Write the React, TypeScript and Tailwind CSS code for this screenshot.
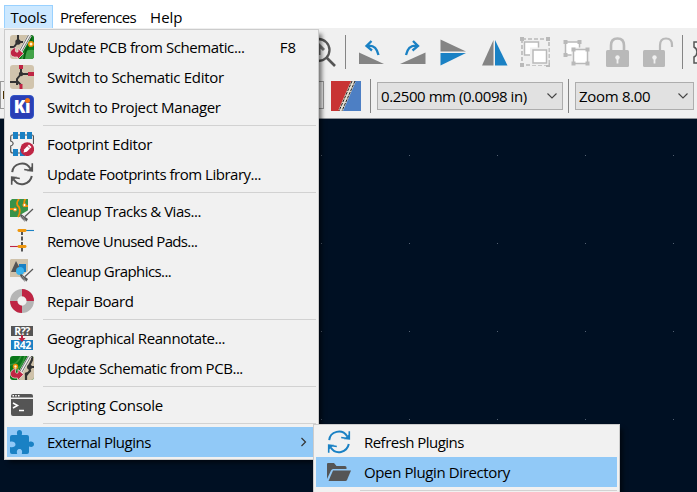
import React from "react";

const FONT = "font-['Open_Sans','Noto_Sans',sans-serif]";

type IconProps = { box: string; children: React.ReactNode; className?: string };

function Icon({ box, children, className = "h-6 w-6" }: IconProps) {
  return (
    <svg viewBox={box} className={`block shrink-0 ${className}`} fill="none">
      {children}
    </svg>
  );
}

const TransferArrow = () => (
  <>
    <path d="M20 0L8 21" stroke="#eee" strokeWidth="4" />
    <path d="M18.5 0L9 17M20.5 1L12 16" stroke="#666" strokeWidth="0.9" />
    <path d="M6 12.5C-2 14 -1.500 23.500 7.500 22V24.500L13.500 18.500L8 13.500V17Q4 18 6 12.500Z" fill="#bf2544" stroke="#f3e9e6" strokeWidth="0.7" />
  </>
);

const PcbFromSchematic = () => (
  <Icon box="0 0 24 24">
    <clipPath id="pfs"><rect width="24" height="24" rx="3" /></clipPath>
    <g clipPath="url(#pfs)">
      <rect width="24" height="24" fill="#cfc2aa" />
      <path d="M8 0V7M8 7H13M7 8L4 12H0" stroke="#333" strokeWidth="2" />
      <circle cx="8" cy="7" r="2.7" fill="#333" />
      <path d="M24 0V24H8L20 0Z" fill="#0c7c1b" />
      <path d="M14 17Q19 14 24 15V24H11Z" fill="#42a348" />
      <path d="M21 0V6M19 11Q15 15 14 24" stroke="#075e12" strokeWidth="2" />
      <circle cx="21" cy="9" r="2.3" fill="#fff2d0" stroke="#e88b00" strokeWidth="1.6" />
      <TransferArrow />
    </g>
  </Icon>
);

const SchematicFromPcb = () => (
  <Icon box="0 0 24 24">
    <clipPath id="sfp"><rect width="24" height="24" rx="3" /></clipPath>
    <g clipPath="url(#sfp)">
      <rect width="24" height="24" fill="#087719" />
      <path d="M0 9Q8 8 11 0M3 16Q12 12 15 0" stroke="#35933b" strokeWidth="1.6" />
      <path d="M24 0V24H9L20 0Z" fill="#cfc2aa" />
      <path d="M22 0V4L19 10L20 15L16 19V24M18 11H24" stroke="#333" strokeWidth="2.2" />
      <circle cx="19.500" cy="11" r="2.5" fill="#333" />
      <circle cx="16.500" cy="18" r="1.800" fill="#333" />
      <circle cx="5.500" cy="10.500" r="2" fill="#fff2d0" stroke="#e88b00" strokeWidth="1.5" />
      <TransferArrow />
    </g>
  </Icon>
);

const SchematicIcon = () => (
  <Icon box="0 0 24 24">
    <rect width="24" height="24" rx="3" fill="#d1c4ad" />
    <path d="M11 4V9L7 14V20M11 9H19M0 17H7M7 16L11 20" stroke="#333" strokeWidth="2" />
    <path d="M11 0V4M18 9H24" stroke="#bf2544" strokeWidth="4" />
    <path d="M11 19V24" stroke="#bf2544" strokeWidth="3" />
    <circle cx="11" cy="9" r="2.2" fill="#333" />
  </Icon>
);

const KiIcon = () => (
  <div className="relative flex h-6 w-6 items-center justify-center rounded-[4px] border border-[#3156c8] bg-[#2a3fb5]">
    <span className="text-[17px] font-extrabold leading-6 tracking-[-0.3px] text-white">Kı</span>
    <span className="absolute right-[3px] top-[2px] h-[5px] w-[5px] rounded-full bg-[#f47612]" />
  </div>
);

const FootprintIcon = () => (
  <Icon box="0 0 24 24">
    <path d="M2 3H22Q23.5 3 23.5 5V12M2 3Q.7 3 .7 5V9C4 10 4 13 .7 14V19Q.7 21 3 21H12" stroke="#555" strokeWidth="1.2" />
    <path d="M3 0H8V7H3ZM10 0H15V7H10ZM17 0H22V7H17ZM3 17H8V24H3ZM10 17H15V24H10Z" fill="#1a81c4" />
    <circle cx="17.2" cy="17.2" r="6.9" fill="#bf2544" />
    <path d="M13.5 20.5L14.3 17.2L19 12.5L21.5 15L16.8 19.7Z" fill="#fff" />
    <path d="M17.5 14L20 16.5" stroke="#bf2544" strokeWidth=".7" />
  </Icon>
);

const RefreshIcon = ({ color }: { color: string }) => (
  <Icon box="0 0 24 24">
    <path d="M2.2 10.2C3 1.5 15 -2 20.3 6.5M21.8 14C20 22.5 9 25.5 3.7 17.5" stroke={color} strokeWidth="2" />
    <path d="M22.3 1.2V8.7L14.2 7.5M1.7 22.8V15.3L9.8 16.500" stroke={color} strokeWidth="1.6" />
    <path d="M22.5 4V9.2H17ZM1.5 20V14.8H7Z" fill={color} />
  </Icon>
);

const Brush = () => (
  <>
    <path d="M23 10L15 17.5" stroke="#555" strokeWidth="1.2" />
    <path d="M11 15L18 20L16.5 22.5Q11 20 10 16Z" fill="#555" />
    <path d="M12 17L16 22M9.8 17.2L15 23" stroke="#aaa" strokeWidth=".7" />
  </>
);

const TracksIcon = () => (
  <Icon box="0 0 24 24">
    <path d="M2 0H18V12L10 18H0V2Z" fill="#389249" />
    <path d="M0 10H5M9 0Q5 5 9 8Q11 13 8 18M18 7H14Q14 0 16 0" stroke="#f18d07" strokeWidth="1.8" />
    <circle cx="5" cy="10.5" r="1.6" fill="#fff" stroke="#f18d07" />
    <circle cx="14.5" cy="6" r="1.6" fill="#fff" stroke="#f18d07" />
    <path d="M22 9L10 16L12 22L19 21Z" fill="#f0f0f0" />
    <Brush />
  </Icon>
);

const PadsIcon = () => (
  <Icon box="0 0 24 24">
    <path d="M12 2V23" stroke="#555" strokeWidth="2" strokeDasharray="4 1.5" />
    <path d="M14 1.5H24" stroke="#1a81c4" strokeWidth="1.1" />
    <path d="M0 17.500H9" stroke="#bf2544" strokeWidth="1.1" />
    <rect x="7.5" y="0" width="9" height="3" rx="1.4" fill="#ee960d" />
    <rect x="7.5" y="16" width="9" height="3" rx="1.4" fill="#ee960d" />
  </Icon>
);

const GraphicsIcon = () => (
  <Icon box="0 0 24 24">
    <path d="M1 0H18V12L10 18H0V1Z" fill="#cfc2aa" />
    <path d="M6 2L12 13H1Z" fill="#555" />
    <rect x="9" y="5" width="7" height="8" fill="#1a81c4" />
    <circle cx="10" cy="12" r="4" fill="#38b2ec" />
    <Brush />
  </Icon>
);

const RepairIcon = () => (
  <Icon box="0 0 24 24">
    <circle cx="12" cy="12" r="8.3" stroke="#b5b5b5" strokeWidth="7.3" />
    <path d="M12 3.7A8.3 8.3 0 0 1 20.3 12M12 20.3A8.3 8.3 0 0 1 3.7 12" stroke="#bf2544" strokeWidth="7.3" />
  </Icon>
);

const ReannotateIcon = () => (
  <div className="relative flex h-6 w-6 flex-col gap-1 pl-px text-[10.5px] font-bold leading-[10px] text-white">
    <span className="block h-2.5 w-[22px] bg-[#555] text-center tracking-[-0.4px]">R??</span>
    <span className="block h-2.5 w-[22px] bg-[#1a81c4] text-center tracking-[-0.5px]">R42</span>
    <svg viewBox="0 0 8 8" className="absolute left-2 top-[9px] h-2 w-2">
      <path d="M3 0H5V3H7.5L4 7L.5 3H3Z" fill="#bf2544" />
    </svg>
  </div>
);

const ConsoleIcon = () => (
  <Icon box="0 0 24 24">
    <path d="M3 1H21Q23 1 23 3V4.5H1V3Q1 1 3 1ZM1 6H23V21Q23 23 21 23H3Q1 23 1 21Z" fill="#555" />
    <path d="M2.5 2.8H4M5.2 2.8H6.7M8 2.8H9.5" stroke="#fff" strokeWidth="1.4" />
    <path d="M3 10L7.5 12.5L3 15M9 17.5H14" stroke="#fff" strokeWidth="1.5" />
  </Icon>
);

const PuzzleIcon = () => (
  <Icon box="0 0 24 24">
    <path d="M2 5H7.3C6.6 3 6.8 0 9.5 0S12.4 3 11.7 5H17Q19 5 19 7V12C21 11 24 11.5 24 14.3S21 17.5 19 16.5V22Q19 24 17 24H11.8C12.6 21.5 12 19 9.5 19S6.4 21.5 7.2 24H2Q0 24 0 22V17C2.5 17.8 5.5 17 5.5 14.5S2.5 11 0 11.8V7Q0 5 2 5Z" fill="#1a81c4" />
  </Icon>
);

const FolderIcon = () => (
  <Icon box="0 0 24 24">
    <path d="M0 19V4Q0 3 1 3H7L9.5 6H18Q19.5 6 19.5 7.5V9H6Q4.8 9 4 10.5Z" fill="#555" />
    <path d="M6 10.5H24L20 20Q19.5 21 18.5 21H1.5Z" fill="#555" />
  </Icon>
);

type RowProps = {
  icon: React.ReactNode;
  label: string;
  tracking: string;
  shortcut?: string;
  active?: boolean;
  arrow?: boolean;
  sub?: boolean;
};

function Row({ icon, label, tracking, shortcut, active, arrow, sub }: RowProps) {
  return (
    <div className={`flex h-[30px] items-center ${sub ? "pl-[11px]" : "pl-[3px]"} ${active ? "bg-[#91c9f7]" : ""}`}>
      {icon}
      <span className={`ml-[13px] whitespace-nowrap ${tracking}`}>{label}</span>
      {shortcut && <span className="ml-auto mr-5">{shortcut}</span>}
      {arrow && (
        <svg viewBox="0 0 8 12" className="ml-auto mr-2 h-3 w-2" fill="none">
          <path d="M1.5 2L5.5 6L1.5 10" stroke="#333" strokeWidth="1.2" />
        </svg>
      )}
    </div>
  );
}

const Rule = () => (
  <div className="h-[7px] pl-9 pt-[3px]">
    <div className="h-px bg-[#d2d2d2]" />
  </div>
);

const Tool = ({ box, children }: { box: string; children: React.ReactNode }) => (
  <Icon box={box} className="h-10 w-[41px]">{children}</Icon>
);

function Combo({ label, className }: { label: string; className: string }) {
  return (
    <div className={`flex h-7 shrink-0 items-center justify-between border border-[#adadad] bg-[#e1e1e1] pl-[3px] pr-1 ${className}`}>
      <span className="whitespace-nowrap">{label}</span>
      <svg viewBox="0 0 12 8" className="h-2 w-3" fill="none">
        <path d="M1.5 1.5L6 6L10.5 1.5" stroke="#444" strokeWidth="1.1" />
      </svg>
    </div>
  );
}

function TopToolbar() {
  return (
    <div className="flex h-11 pl-[310px] pt-1">
      <Tool box="310 32 41 40">
        <circle cx="318.5" cy="50" r="11" stroke="#555" strokeWidth="2.3" />
        <path d="M314 50L319 45L324 50M319 46V55" stroke="#777" strokeWidth="3" />
        <path d="M326 57L335 66" stroke="#555" strokeWidth="2.7" />
        <path d="M345.5 35V69" stroke="#858585" />
      </Tool>
      <Tool box="351 32 41 40">
        <path d="M359 52.5V64H384Z" fill="#848484" />
        <path d="M366.5 46Q376 44 378.5 55M371.5 41L366.5 46L372 50.5" stroke="#1a81c4" strokeWidth="2.3" />
      </Tool>
      <Tool box="392 32 41 40">
        <path d="M425.5 52.5V64H400Z" fill="#848484" />
        <path d="M418 46Q408.5 44 406 55M413 41L418 46L412.5 50.5" stroke="#1a81c4" strokeWidth="2.3" />
      </Tool>
      <Tool box="433 32 41 40">
        <path d="M440.5 39.5V51.5H466Z" fill="#848484" />
        <path d="M440.5 53V65.5L466 53Z" fill="#1a81c4" />
      </Tool>
      <Tool box="474 32 41 40">
        <path d="M493.5 40V65.5H482Z" fill="#848484" />
        <path d="M495 40V65.5H507.5Z" fill="#1a81c4" />
      </Tool>
      <Tool box="515 32 41 40">
        <rect x="522" y="39" width="27" height="26" stroke="#b9b9b9" strokeWidth="1.6" strokeDasharray="4 2" />
        <path d="M520 37H524V41H520ZM546 37H550V41H546ZM520 63H524V67H520ZM546 63H550V67H546Z" fill="#b9b9b9" />
        <rect x="524.5" y="42" width="14" height="13" fill="#fff" stroke="#b9b9b9" strokeWidth="1.5" />
        <rect x="532" y="49.5" width="14.5" height="13.5" fill="#fff" stroke="#f0f0f0" strokeWidth="4" />
        <rect x="533" y="50" width="13.5" height="13" fill="#fff" stroke="#b9b9b9" strokeWidth="1.5" />
      </Tool>
      <Tool box="556 32 41 40">
        <rect x="565.5" y="42" width="14" height="13" fill="#fff" stroke="#b9b9b9" strokeWidth="1.5" />
        <path d="M563.5 40H567.5V44H563.5ZM577.5 40H581.5V44H577.5ZM563.5 53H567.5V57H563.5Z" fill="#b9b9b9" />
        <rect x="573.5" y="49.5" width="14" height="14" fill="#fff" stroke="#f0f0f0" strokeWidth="4" />
        <rect x="573.5" y="49.5" width="14" height="14" fill="#fff" stroke="#b9b9b9" strokeWidth="1.5" />
        <path d="M571.5 47.5H575.5V51.5H571.5ZM585.5 47.5H589.5V51.5H585.5ZM571.5 61.5H575.5V65.5H571.5ZM585.5 61.5H589.5V65.5H585.5Z" fill="#b9b9b9" />
      </Tool>
      <Tool box="597 32 41 40">
        <rect x="606" y="50" width="23" height="17" rx="1.5" fill="#b9b9b9" />
        <path d="M611 50V45.5Q611 38.5 617.5 38.5T624 45.5V50" stroke="#b9b9b9" strokeWidth="2.6" />
        <circle cx="617.5" cy="57.5" r="2.2" fill="#f0f0f0" />
        <path d="M617.5 58V63.5" stroke="#f0f0f0" strokeWidth="1.8" />
      </Tool>
      <Tool box="638 32 41 40">
        <rect x="643" y="50" width="22" height="17" rx="1.5" fill="#b9b9b9" />
        <path d="M660 50V45.5Q660 38.5 666 38.5T672 45V47" stroke="#b9b9b9" strokeWidth="2.2" />
        <circle cx="654.5" cy="57.5" r="2.2" fill="#f0f0f0" />
        <path d="M654.5 58V63.5" stroke="#f0f0f0" strokeWidth="1.8" />
      </Tool>
      <Icon box="679 32 18 40" className="h-10 w-[18px]">
        <path d="M682.5 35V69" stroke="#858585" />
        <path d="M699 42H694V47C698 49 698 55 694 57V63H699" stroke="#555" strokeWidth="1.5" fill="#f6f6f6" />
      </Icon>
    </div>
  );
}

function SettingsBar() {
  return (
    <div className="flex h-[46px] items-center pt-px">
      <div className="-mt-px flex h-7 w-[324px] shrink-0 items-center border border-[#999] bg-[#f0f0f0]">
        <span className="ml-0.5 h-2 w-2 bg-[#4b3000]" />
      </div>
      <Icon box="0 0 30 30" className="ml-[7px] h-[30px] w-[30px]">
        <path d="M0 0H23L9 30H0Z" fill="#c83434" />
        <path d="M23 0H30V30H10Z" fill="#4d7fc4" />
        <path d="M22.5 0L9.5 30" stroke="#e5e0d4" strokeWidth="4.5" />
        <path d="M21 0L8 30M24 0L11 30" stroke="#222" strokeWidth="1" strokeDasharray="3 1" />
      </Icon>
      <span className="ml-[9px] h-[34px] w-px bg-[#858585]" />
      <Combo label="0.2500 mm (0.0098 in)" className="ml-1.5 w-[186px] tracking-[-0.44px]" />
      <span className="ml-[5px] h-[34px] w-px bg-[#858585]" />
      <Combo label="Zoom 8.00" className="ml-1.5 w-[119px] tracking-[-0.3px]" />
    </div>
  );
}

const gridX = [321, 409, 497, 585, 673];
const gridY = [36, 124, 212, 300];

export default function App() {
  return (
    <div className={`relative flex h-[492px] w-[697px] flex-col overflow-hidden bg-white text-[15px] leading-5 text-black ${FONT}`}>
      <div className="flex h-7 shrink-0 pl-1 pt-[5px]">
        <div className="flex h-6 w-[49px] shrink-0 justify-center border border-[#99d1ff] bg-[#cce8ff] pt-px tracking-[-0.2px]">Tools</div>
        <span className="ml-[7px] mt-[2px] tracking-[-0.68px]">Preferences</span>
        <span className="ml-[14px] mt-[2px]">Help</span>
      </div>
      <div className="flex h-[91px] shrink-0 flex-col border-b border-[#8e9298] bg-[#f0f0f0]">
        <TopToolbar />
        <SettingsBar />
      </div>
      <svg viewBox="0 0 697 373" className="block h-[373px] w-[697px] bg-[#001023]">
        {gridY.map((y) => gridX.map((x) => <rect key={`${x}-${y}`} x={x} y={y} width="1" height="1" fill="#536071" />))}
      </svg>

      <div className="absolute left-1 top-[29px] h-[431px] w-[315px] border border-[#cccccc] bg-[#f1f1f1] p-0.5 shadow-[4px_4px_4px_-1px_rgba(0,0,0,0.5)]">
        <Row icon={<PcbFromSchematic />} label="Update PCB from Schematic..." tracking="tracking-[-0.4px]" shortcut="F8" />
        <Row icon={<SchematicIcon />} label="Switch to Schematic Editor" tracking="tracking-[-0.31px]" />
        <Row icon={<KiIcon />} label="Switch to Project Manager" tracking="tracking-[-0.35px]" />
        <Rule />
        <Row icon={<FootprintIcon />} label="Footprint Editor" tracking="tracking-[-0.34px]" />
        <Row icon={<RefreshIcon color="#555" />} label="Update Footprints from Library..." tracking="tracking-[-0.48px]" />
        <Rule />
        <Row icon={<TracksIcon />} label="Cleanup Tracks & Vias..." tracking="tracking-[-0.47px]" />
        <Row icon={<PadsIcon />} label="Remove Unused Pads..." tracking="tracking-[-0.65px]" />
        <Row icon={<GraphicsIcon />} label="Cleanup Graphics..." tracking="tracking-[-0.58px]" />
        <Row icon={<RepairIcon />} label="Repair Board" tracking="tracking-[-0.4px]" />
        <Rule />
        <Row icon={<ReannotateIcon />} label="Geographical Reannotate..." tracking="tracking-[-0.42px]" />
        <Row icon={<SchematicFromPcb />} label="Update Schematic from PCB..." tracking="tracking-[-0.46px]" />
        <Rule />
        <Row icon={<ConsoleIcon />} label="Scripting Console" tracking="tracking-[-0.3px]" />
        <Rule />
        <Row icon={<PuzzleIcon />} label="External Plugins" tracking="tracking-[-0.48px]" active arrow />
      </div>

      <div className="absolute left-[313px] top-[424px] h-[80px] w-[307px] border border-[#cccccc] bg-[#f1f1f1] p-0.5 shadow-[4px_4px_4px_-1px_rgba(0,0,0,0.5)]">
        <Row icon={<RefreshIcon color="#1a81c4" />} label="Refresh Plugins" tracking="tracking-[-0.53px]" sub />
        <Row icon={<FolderIcon />} label="Open Plugin Directory" tracking="tracking-[-0.38px]" active sub />
        <div className="pl-2"><Rule /></div>
      </div>
    </div>
  );
}
